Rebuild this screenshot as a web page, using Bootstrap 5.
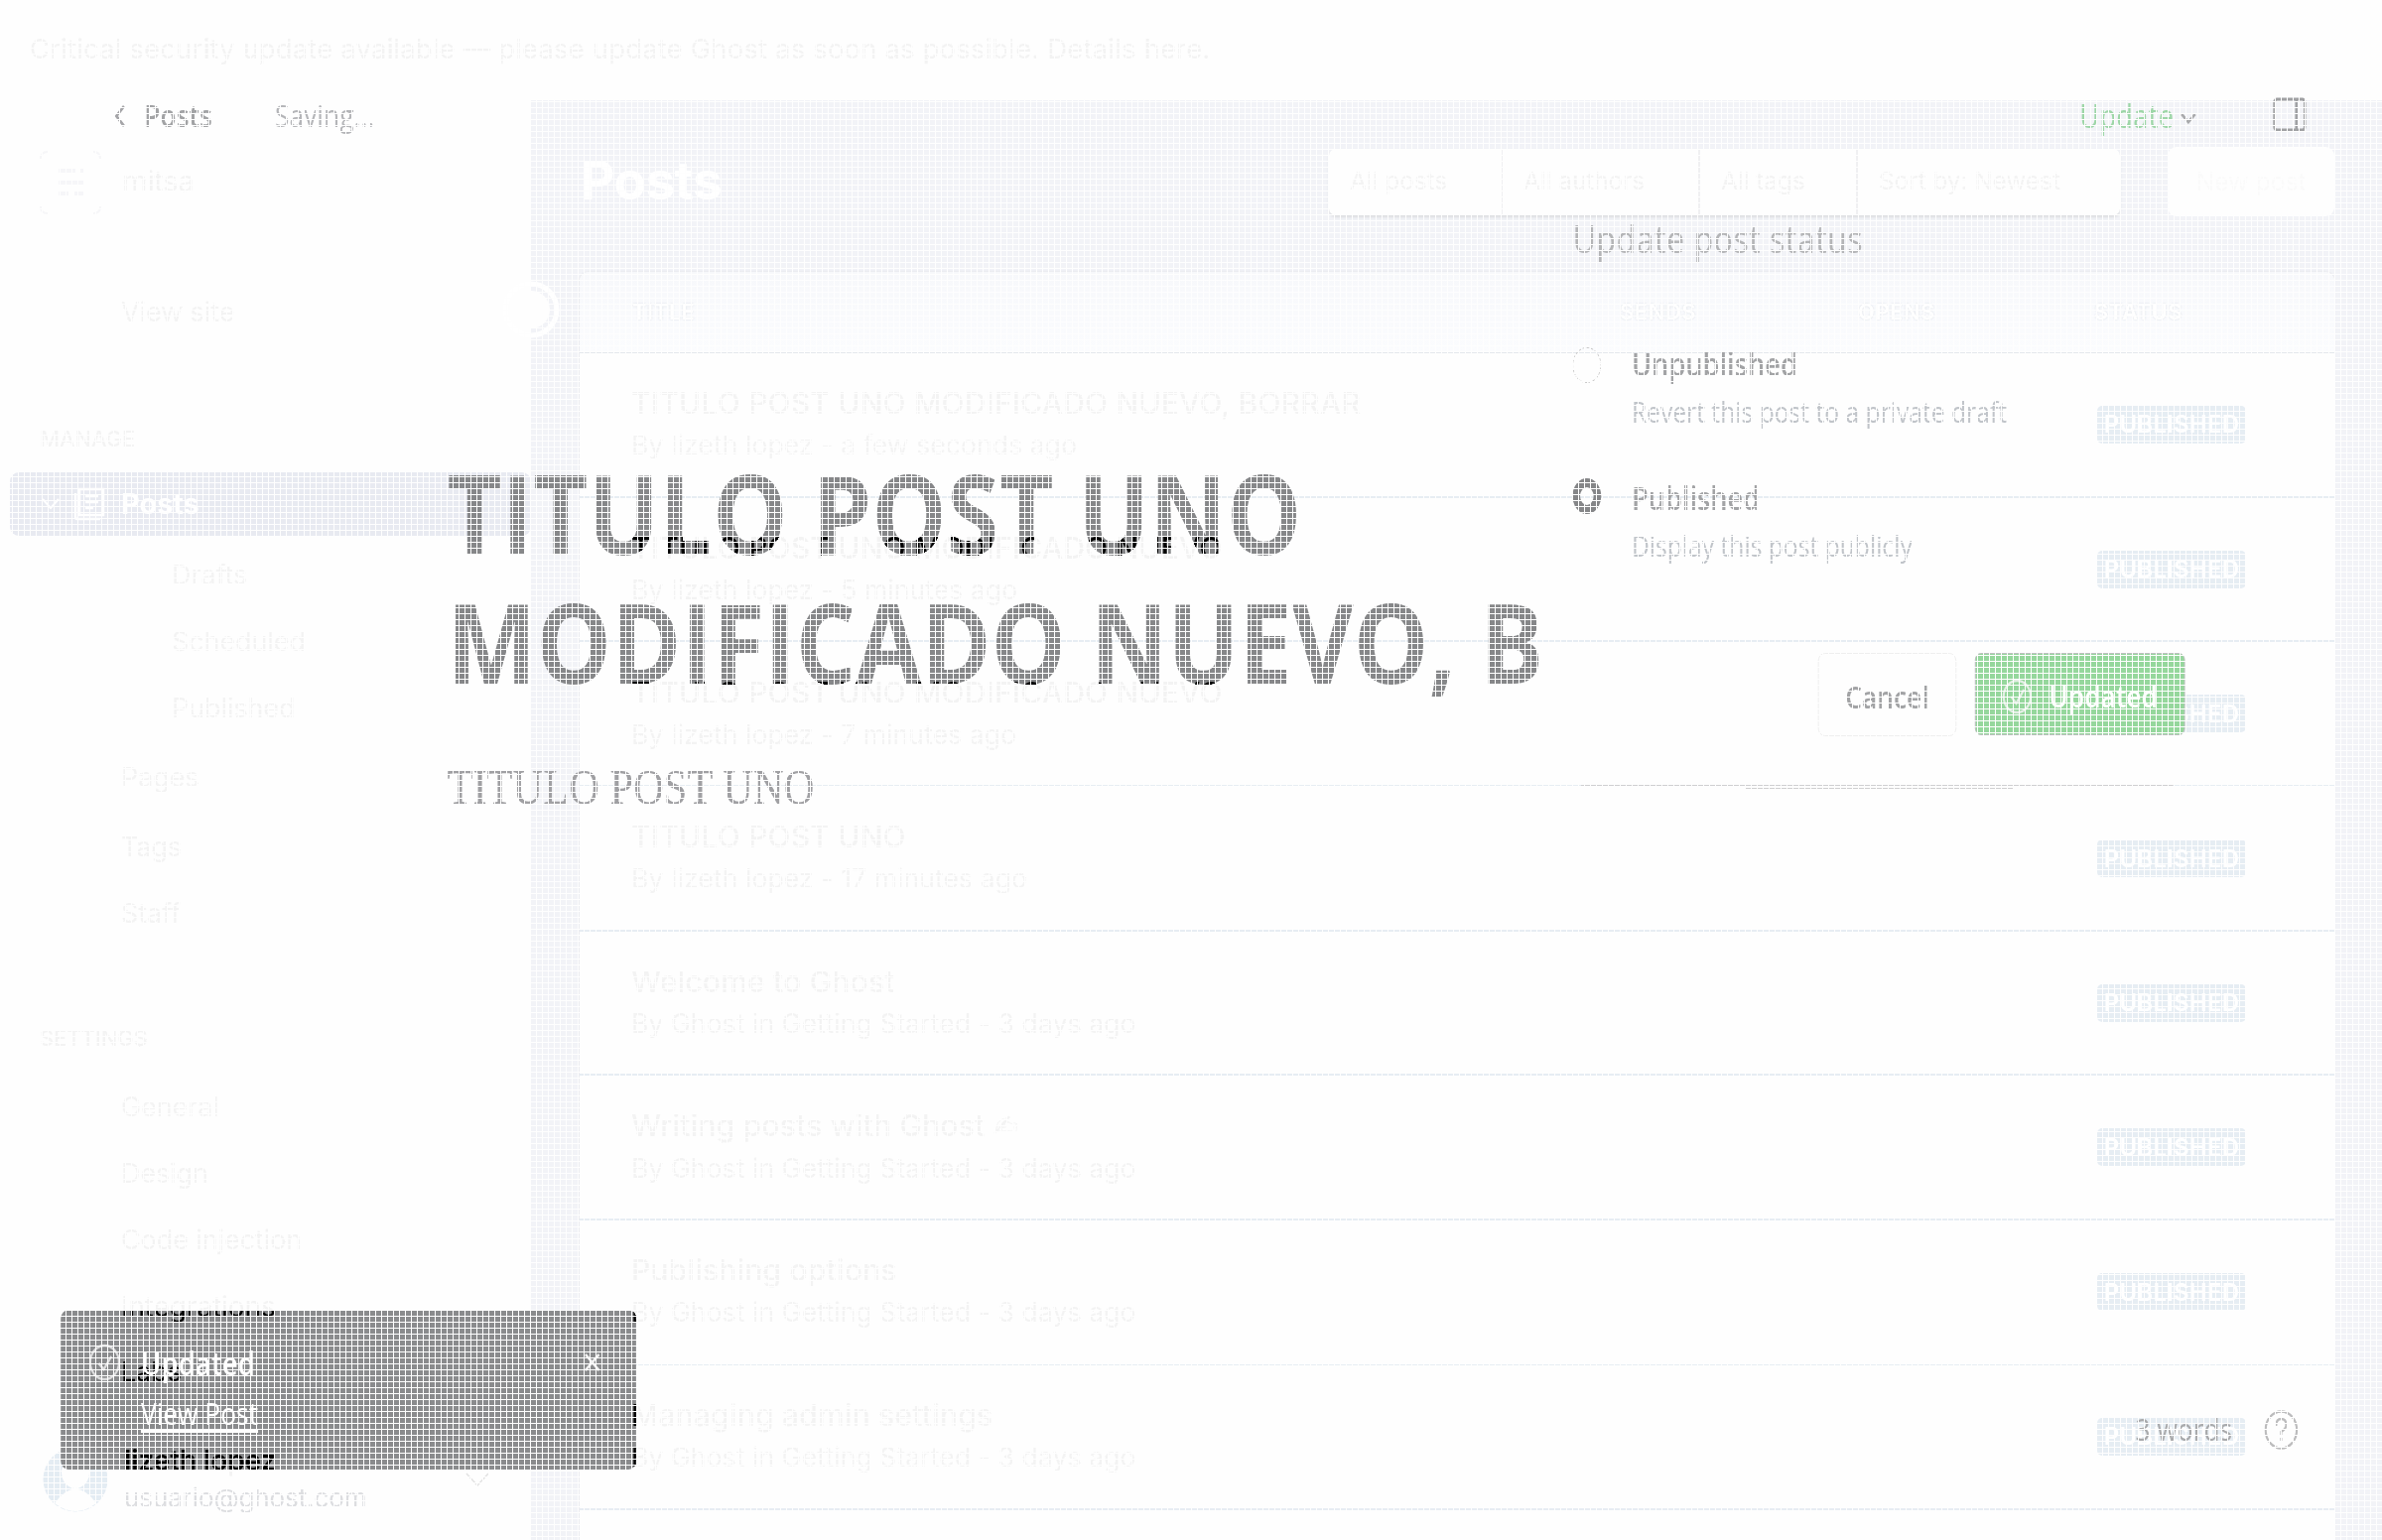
<!DOCTYPE html>
<html lang="en">
<head>
<meta charset="utf-8">
<title>Posts</title>
<link rel="stylesheet" href="https://cdn.jsdelivr.net/npm/bootstrap@5.3.0/dist/css/bootstrap.min.css">
<style>
html,body{height:1552px;overflow:hidden}
body{background:#fefefe;font-family:Inter,"Liberation Sans",sans-serif;font-size:27px;line-height:1.2;position:relative;letter-spacing:-.1px}
/* woven texture over both screens */
.weave{position:absolute;inset:0;z-index:9;pointer-events:none;background:repeating-linear-gradient(90deg,#fefefe 0 1px,transparent 1px 6px),repeating-linear-gradient(0deg,transparent 0 5px,#fefefe 5px 6px);background-size:100% 1554px;background-position:0 0}
.ghosted{position:relative;z-index:3;mix-blend-mode:color-burn;color:#161616}
.notice{height:101px;padding:0 0 2px 30px;font-size:27.5px;letter-spacing:.15px}
.side{width:535px;flex:none}
.item{height:68px;padding-left:122px;display:flex;align-items:center}
.sub-item{padding-left:173px}
.cap-label{font-size:22px;font-weight:500;padding-left:40px;display:flex;align-items:center;color:#161616}
.active-row{height:64px;margin-left:10px;padding-left:32px;background:#e8eaf1;border-radius:9px;color:#fff;font-weight:700;font-size:29px}
.main-pane{flex:1;background:#f2f3f7;padding:0 48px 0 49px;height:1451px}
.head{height:173px;padding-bottom:9px}
.head h1{font-size:53px;font-weight:700;color:#fff;letter-spacing:-.5px;margin:0 0 0 1px}
.filters{width:797px;height:67px;background:#fefefe;border-radius:7px;box-shadow:0 2px 3px #dcdde0;font-size:24.5px;margin-right:48px}
.filters>div{display:flex;align-items:center;padding-left:21px;border-left:2px solid #f0f0f2}
.filters>div:first-child{border:0}
.newpost{width:168px;height:70px;background:#fefefe;border-radius:9px;font-size:25px}
.sheet{background:#fefefe;border-radius:9px 9px 0 0;box-shadow:0 0 2px #d9dadd;height:1290px}
.thead-row{height:82px;background:linear-gradient(#f7f8fb,#fbfcfe);border-radius:9px 9px 0 0;border-bottom:1px solid #e4e8ed;font-size:22px;font-weight:600;color:#fff;letter-spacing:.5px;text-shadow:0 0 2px #d5dae0}
.c1{padding-left:53px;width:1048px}.c2{width:240px}.c3{width:238px}
.post-row{height:145.7px;border-bottom:2px solid #e7edf3;padding:0 89px 0 52px}
.post-title{font-size:30px;font-weight:500;line-height:36px;margin-bottom:8px;letter-spacing:.2px;margin-top:-3px}
.post-meta{font-size:26.5px;line-height:32px;letter-spacing:.1px}
.pill{width:150px;height:38px;border-radius:5px;background:#e6edf3;color:#fff;font-size:24px;font-weight:600;letter-spacing:.2px;padding-top:2px}
/* editor screen, drawn in a narrower horizontal scale */
.editor{position:absolute;z-index:2;left:0;top:0;width:2824px;height:1552px;transform:scaleX(.85);transform-origin:0 0;font-family:"Open Sans","Noto Sans",sans-serif;font-size:31px;color:#a2a3a5;letter-spacing:0}
.topbar{height:48px;margin-top:93px;padding:0 90px 0 136px}
.doc{padding:309.5px 0 0 530px}
.doc h2{font-size:112px;line-height:130px;font-weight:700;color:#868789;margin:0;width:1500px;white-space:nowrap}
.doc p{font-family:"Liberation Serif",serif;font-size:50px;line-height:60px;margin:52px 0 0;color:#a0a0a3;white-space:nowrap}
.status-menu{position:absolute;left:1864px;top:216px;width:726px}
.status-menu h3{font-size:38px;font-weight:400;line-height:48px;margin:0;color:#b4b5b7;letter-spacing:.5px}
.opt{gap:36px}
.opt b{display:block;font-weight:600;line-height:44px;font-size:32px}
.opt span{display:block;font-size:29px;line-height:44px;color:#c0c4c9}
.dot{width:34px;height:36px;border-radius:50%;flex:none;border:1px dashed #c6c6c6;margin-top:5px}
.dot.on{border:9px solid #858688;margin-top:2px}
.btn-c{width:164px;height:84px;border:1px solid #eee;border-radius:8px;font-weight:600;padding-top:5px}
.btn-u{width:249px;height:83px;border-radius:7px;background:#95d79c;border:1px solid #bdbdc0;color:#fff;font-weight:600;gap:18px;padding-top:4px}
.toast-box{position:absolute;left:72px;top:1320px;width:682px;height:161px;border-radius:9px;background:#8a8b8d;color:#fff;padding:34px 42px 0 34px}
.foot{position:absolute;right:100px;top:1420px;gap:38px}
svg{display:block;fill:none;flex:none}
</style>
<script src="https://cdn.jsdelivr.net/npm/bootstrap@5.3.0/dist/js/bootstrap.bundle.min.js"></script>
</head>
<body>
<div class="notice d-flex align-items-center"><div class="ghosted">Critical security update available — please update Ghost as soon as possible. Details here.</div></div>
<div class="d-flex">
  <nav class="side">
    <div class="d-flex align-items-center" style="height:165px;padding:0 0 0 40px">
      <svg width="62" height="64" stroke="#f6f6f8" stroke-width="2"><path d="M1 8Q1 1 8 1M54 1Q61 1 61 8M61 56Q61 63 54 63M8 63Q1 63 1 56"/><path stroke-width="4" d="M19 20h17m5 0h3M19 32h25M19 43h10m6 0h9"/></svg>
      <div class="ghosted" style="margin-left:21px;font-size:29px">mitsa</div>
    </div>
    <div class="item" style="height:98px"><span class="ghosted">View site</span></div>
    <div class="cap-label" style="height:112px;padding-top:44px"><span class="ghosted">MANAGE</span></div>
    <div class="active-row d-flex align-items-center">
      <svg width="18" height="12" stroke="#fff" stroke-width="2"><path d="M1 1l8 9 8-9"/></svg>
      <svg width="32" height="34" stroke="#fff" stroke-width="2.5" style="margin:0 16px 0 14px"><path d="M6 2h24v26H6zM2 6v24q0 2 2 2h23M12 9h13M12 15h13M12 21h8"/></svg>
      Posts
    </div>
    <div class="item sub-item" style="padding-top:6px;height:74px"><span class="ghosted">Drafts</span></div>
    <div class="item sub-item" style="height:66px"><span class="ghosted">Scheduled</span></div>
    <div class="item sub-item"><span class="ghosted">Published</span></div>
    <div class="item" style="height:72px"><span class="ghosted">Pages</span></div>
    <div class="item"><span class="ghosted">Tags</span></div>
    <div class="item" style="height:66px"><span class="ghosted">Staff</span></div>
    <div class="cap-label" style="height:128px;padding-top:56px"><span class="ghosted">SETTINGS</span></div>
    <div class="item" style="height:67px;padding-top:2px"><span class="ghosted">General</span></div>
    <div class="item" style="height:67px;padding-top:2px"><span class="ghosted">Design</span></div>
    <div class="item" style="height:67px;padding-top:2px"><span class="ghosted">Code injection</span></div>
    <div class="item" style="height:67px;padding-top:2px;font-size:28px"><span class="ghosted">Integrations</span></div>
    <div class="item" style="height:67px"><span class="ghosted">Labs</span></div>
    <div class="d-flex align-items-center" style="margin-top:36px;padding-left:43px">
      <svg width="66" height="66"><circle cx="33" cy="33" r="32.5" fill="#e4ecf3"/><ellipse cx="33" cy="26" rx="14" ry="16" fill="#fefefe"/><path d="M12 57Q33 28 54 57Q33 73 12 57z" fill="#fefefe"/></svg>
      <div style="margin-left:16px;line-height:38px;flex:1"><div class="ghosted fw-semibold" style="font-size:28px">lizeth lopez</div><div style="color:#dcdde0;font-size:26px">usuario@ghost.com</div></div>
      <svg width="24" height="14" stroke="#e2e2e2" stroke-width="1.5" style="margin-right:42px"><path d="M1 1l11 12L23 1"/></svg>
    </div>
  </nav>
  <main class="main-pane">
    <div class="head d-flex align-items-center">
      <h1 class="me-auto">Posts</h1>
      <div class="filters d-flex">
        <div style="width:173px"><span class="ghosted">All posts</span></div><div style="width:199px"><span class="ghosted">All authors</span></div><div style="width:159px"><span class="ghosted">All tags</span></div><div class="flex-fill"><span class="ghosted">Sort by: Newest</span></div>
      </div>
      <div class="newpost d-flex align-items-center justify-content-center"><span class="ghosted" style="color:#333">New post</span></div>
    </div>
    <div class="sheet">
      <div class="thead-row d-flex align-items-center"><div class="c1">TITLE</div><div class="c2">SENDS</div><div class="c3">OPENS</div><div>STATUS</div></div>
      <div id="posts"></div>
    </div>
  </main>
</div>
<!-- sidebar collapse knob -->
<svg width="60" height="64" stroke="#fff" stroke-width="5" style="position:absolute;left:507px;top:281px"><circle cx="28" cy="31" r="26"/><circle cx="28" cy="31" r="19" fill="#fefefe" stroke="none"/></svg>

<div class="editor">
  <div class="topbar d-flex align-items-center">
    <svg width="13" height="22" stroke="#a5a5a8" stroke-width="3"><path d="M11 1L2 11l9 10"/></svg>
    <b class="fw-semibold" style="margin-left:22px;width:155px">Posts</b>
    <span class="me-auto" style="color:#b4b5b8">Saving...</span>
    <span style="color:#9dd6a7;font-size:32px;letter-spacing:.4px">Update</span>
    <svg width="20" height="12" stroke="#a9aaac" stroke-width="3" style="margin:4px 90px 0 7px"><path d="M2 2l8 8 8-8"/></svg>
    <svg width="40" height="35" stroke="#a0a1a3" stroke-width="3" style="margin-top:-3px"><rect x="2" y="2" width="36" height="31" rx="3"/><path d="M28 2v31"/></svg>
  </div>
  <div class="doc">
    <h2>TITULO POST UNO<br>MODIFICADO NUEVO, B</h2>
    <p>TITULO POST UNO</p>
  </div>
  <div class="status-menu">
    <h3>Update post status</h3>
    <div class="opt d-flex" style="margin-top:81px"><i class="dot"></i><div><b>Unpublished</b><span style="margin-top:4px">Revert this post to a private draft</span></div></div>
    <div class="opt d-flex" style="margin-top:43px"><i class="dot on"></i><div><b>Published</b><span style="margin-top:4px">Display this post publicly</span></div></div>
    <div class="d-flex" style="margin:86px 0 0 291px;gap:22px">
      <div class="btn-c d-flex align-items-center justify-content-center">Cancel</div>
      <div class="btn-u d-flex align-items-center justify-content-center">
        <svg width="37" height="36" stroke="#e4efe5" stroke-width="2.5"><circle cx="18" cy="18" r="16"/><path d="M11 18l6 7 9-14"/></svg>Updated
      </div>
    </div>
    <div style="height:1px;background:#cfcfd1;margin:49px 14px 0 10px"></div>
    <div style="height:1px;background:#cfcfd1;margin:2px 204px 0 205px"></div>
  </div>
  <div class="toast-box">
    <div class="d-flex align-items-center" style="height:38px">
      <svg width="37" height="38" stroke="#dcdcdd" stroke-width="2.5"><circle cx="18" cy="19" r="17"/><path d="M11 20l6 6 9-13"/></svg>
      <b class="fw-semibold me-auto" style="margin-left:24px;font-size:32.5px">Updated</b>
      <svg width="20" height="20" stroke="#f4f4f4" stroke-width="2.5"><path d="M2 2l16 16M18 2L2 18"/></svg>
    </div>
    <div style="margin:10px 0 0 61px;line-height:44px"><span style="text-decoration:underline;text-underline-offset:5px">View Post</span></div>
  </div>
  <div class="foot d-flex align-items-center"><span style="color:#a9aaac">3 words</span>
    <svg width="40" height="42" stroke="#bcbcbd" stroke-width="2.5"><circle cx="20" cy="21" r="18.5"/><path d="M14 17q0-7 6-7t6 6q0 4-6 7v3M20 29v3"/></svg>
  </div>
</div>
<div class="weave"></div>
<script>
const g=['TITULO POST UNO','By lizeth lopez - ','By Ghost in Getting Started - 3 days ago'];
const rows=[[g[0]+' MODIFICADO NUEVO, BORRAR',g[1]+'a few seconds ago'],[g[0]+' MODIFICADO NUEVO',g[1]+'5 minutes ago'],[g[0]+' MODIFICADO NUEVO',g[1]+'7 minutes ago'],[g[0],g[1]+'17 minutes ago'],['Welcome to Ghost',g[2]],['Writing posts with Ghost <span style="font-family:\'DejaVu Sans\'">✍&#xFE0E;</span>',g[2]],['Publishing options',g[2]],['Managing admin settings',g[2]]];
document.getElementById('posts').innerHTML=rows.map(r=>`<div class="post-row d-flex align-items-center justify-content-between"><div class="ghosted"><div class="post-title">${r[0]}</div><div class="post-meta">${r[1]}</div></div><div class="pill d-flex align-items-center justify-content-center">PUBLISHED</div></div>`).join('');
</script>
</body>
</html>
